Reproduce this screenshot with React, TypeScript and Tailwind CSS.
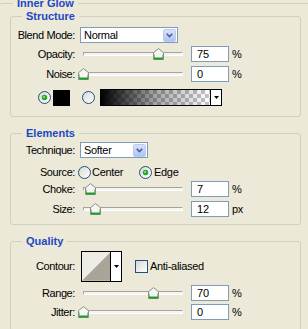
import React from "react";

const Thumb = () => (
  <svg width="11" height="12" viewBox="0 0 11 12" className="block">
    <path d="M0.5 11.5V4.7L5.5 0.6L10.5 4.7V11.5Z" fill="#F6F6F3" stroke="#8C8C8A" />
    <path d="M1.5 6.5V10.5M9.5 6.5V10.5" stroke="#86D086" />
    <path d="M1 10.5H10" stroke="#1E9E2A" strokeWidth="2" />
  </svg>
);

function Slider({ value }: { value: number }) {
  return (
    <div className="relative ml-[3px] h-[16px] w-[110px] shrink-0">
      <div className="absolute left-[5px] top-[6px] h-[4px] w-[100px] rounded-[1px] border border-[#A4A39D] border-b-white border-r-white bg-[#F4F4F1]" />
      <div className="absolute top-[2px]" style={{ left: value }}>
        <Thumb />
      </div>
    </div>
  );
}

function Radio({ checked }: { checked?: boolean }) {
  return (
    <svg width="13" height="13" viewBox="0 0 13 13" className="block shrink-0">
      <defs>
        <linearGradient id="rg" x1="0" y1="0" x2="1" y2="1">
          <stop offset="0" stopColor="#D8D8D1" />
          <stop offset="1" stopColor="#FFFFFF" />
        </linearGradient>
      </defs>
      <circle cx="6.5" cy="6.5" r="6" fill="url(#rg)" stroke="#1C5180" />
      {checked && (
        <>
          <circle cx="6.5" cy="6.5" r="2.7" fill="#25A825" />
          <circle cx="6" cy="6" r="1" fill="#9BE39B" />
        </>
      )}
    </svg>
  );
}

const Label = ({ children }: { children: React.ReactNode }) => (
  <div className="w-[64px] shrink-0 text-right tracking-[-0.4px]">{children}</div>
);

const NumBox = ({ v }: { v: string }) => (
  <div className="ml-[3px] h-[16px] w-[38px] shrink-0 border border-[#7F9DB9] bg-white pl-[5px] leading-[14px]">
    {v}
  </div>
);

const Unit = ({ u }: { u: string }) => <div className="ml-[3px] tracking-[-0.3px]">{u}</div>;

function SliderRow({ label, value, v, unit, mt }: { label: string; value: number; v: string; unit: string; mt: string }) {
  return (
    <div className={`flex h-[16px] items-center ${mt}`}>
      <Label>{label}</Label>
      <Slider value={value} />
      <NumBox v={v} />
      <Unit u={unit} />
    </div>
  );
}

function Select({ text, w }: { text: string; w: string }) {
  return (
    <div className={`ml-[5px] flex h-[16px] ${w} shrink-0 items-center border border-[#7F9DB9] bg-white pl-[3px] pr-[1px]`}>
      <span className="tracking-[-0.3px]">{text}</span>
      <div className="ml-auto flex h-[13px] w-[13px] items-center justify-center rounded-[2px] border border-[#B9CBF5] bg-linear-to-b from-[#D6E2FD] to-[#AFC4F4]">
        <svg width="7" height="5" viewBox="0 0 7 5" className="block">
          <path d="M0.7 0.8L3.5 3.6L6.3 0.8" stroke="#4D6185" strokeWidth="1.6" fill="none" />
        </svg>
      </div>
    </div>
  );
}

const DropArrow = () => (
  <div className="flex h-full w-[11px] items-center justify-center border-l border-black bg-white">
    <svg width="5" height="3" viewBox="0 0 5 3" className="block">
      <path d="M0 0H5L2.5 3Z" fill="#000" />
    </svg>
  </div>
);

const Legend = ({ children, ml }: { children: React.ReactNode; ml: string }) => (
  <legend className={`${ml} px-[4px] text-[11px] font-bold leading-[12px] text-[#1C48C4]`}>{children}</legend>
);

export default function App() {
  return (
    <div className="h-[329px] w-[308px] overflow-hidden bg-[#ECE9D8] font-['Liberation_Sans',Arial,sans-serif] text-[11px] leading-[13px] text-black">
      <fieldset className="-mt-[3px] ml-[-1px] w-[320px] rounded-[3px] border border-[#D0D0BF]">
        <Legend ml="ml-[13px]">Inner Glow</Legend>

        {/* Structure */}
        <fieldset className="ml-[10px] mt-[1px] w-[291px] rounded-[3px] border border-[#D0D0BF] pb-[10px]">
          <Legend ml="ml-[11px]">Structure</Legend>
          <div className="mt-[5px] flex h-[16px] items-center">
            <Label>Blend Mode:</Label>
            <Select text="Normal" w="w-[98px]" />
          </div>
          <SliderRow label="Opacity:" value={75} v="75" unit="%" mt="mt-[3px]" />
          <SliderRow label="Noise:" value={0} v="0" unit="%" mt="mt-[4px]" />
          <div className="mt-[7px] flex h-[17px] items-center">
            <div className="ml-[27px]">
              <Radio checked />
            </div>
            <div className="ml-[2px] h-[16px] w-[17px] bg-black" />
            <div className="ml-[12px]">
              <Radio />
            </div>
            <div className="ml-[5px] flex h-[17px] w-[122px] border border-black">
              <div className="h-full flex-1 bg-[image:repeating-conic-gradient(#c4c4c4_0%_25%,#ffffff_0%_50%)] bg-[length:8px_8px]">
                <div className="h-full w-full bg-linear-to-r from-black via-[rgba(0,0,0,0.35)] to-transparent" />
              </div>
              <DropArrow />
            </div>
          </div>
        </fieldset>

        {/* Elements */}
        <fieldset className="ml-[10px] mt-[10px] w-[291px] rounded-[3px] border border-[#D0D0BF] pb-[7px]">
          <Legend ml="ml-[11px]">Elements</Legend>
          <div className="mt-[3px] flex h-[16px] items-center">
            <Label>Technique:</Label>
            <Select text="Softer" w="w-[68px]" />
          </div>
          <div className="mt-[6px] flex h-[16px] items-center">
            <Label>Source:</Label>
            <div className="ml-[3px]">
              <Radio />
            </div>
            <span className="ml-[1px] w-[47px] tracking-[-0.3px]">Center</span>
            <Radio checked />
            <span className="ml-[2px] tracking-[-0.3px]">Edge</span>
          </div>
          <SliderRow label="Choke:" value={7} v="7" unit="%" mt="mt-[1px]" />
          <SliderRow label="Size:" value={12} v="12" unit="px" mt="mt-[4px]" />
        </fieldset>

        {/* Quality */}
        <fieldset className="ml-[10px] mt-[10px] w-[291px] rounded-[3px] border border-[#D0D0BF] pb-[10px]">
          <Legend ml="ml-[11px]">Quality</Legend>
          <div className="mt-[4px] flex h-[31px] items-center">
            <Label>Contour:</Label>
            <div className="ml-[6px] flex h-[31px] w-[41px] border border-black">
              <svg width="29" height="29" viewBox="0 0 29 29" className="block">
                <rect width="29" height="29" fill="#EEECE4" />
                <path d="M0 29L29 0V29Z" fill="#A9A596" />
              </svg>
              <DropArrow />
            </div>
            <div className="ml-[13px] h-[13px] w-[13px] border border-[#1C5180] bg-linear-to-br from-[#D8D8D1] to-white" />
            <span className="ml-[2px] tracking-[-0.3px]">Anti-aliased</span>
          </div>
          <SliderRow label="Range:" value={70} v="70" unit="%" mt="mt-[3px]" />
          <SliderRow label="Jitter:" value={0} v="0" unit="%" mt="mt-[3px]" />
        </fieldset>
      </fieldset>
    </div>
  );
}
